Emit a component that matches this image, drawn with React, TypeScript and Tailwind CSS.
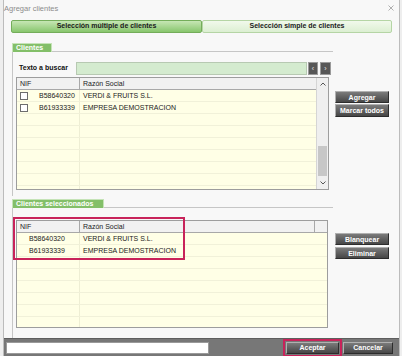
import React from 'react';

type Cliente = { nif: string; name: string };

const CLIENTES: Cliente[] = [
  { nif: 'B58640320', name: 'VERDI & FRUITS S.L.' },
  { nif: 'B61933339', name: 'EMPRESA DEMOSTRACION' },
];

function Chevron({ dir }: { dir: 'up' | 'down' }) {
  return (
    <svg width="6" height="4" viewBox="0 0 6 4" className="text-[#555]">
      <polyline
        points={dir === 'up' ? '0.5,3.5 3,1 5.5,3.5' : '0.5,0.5 3,3 5.5,0.5'}
        fill="none"
        stroke="currentColor"
        strokeWidth="1"
      />
    </svg>
  );
}

function DarkButton({ label, className = '' }: { label: string; className?: string }) {
  return (
    <div
      className={`flex items-center justify-center h-[12px] bg-gradient-to-b from-[#7b7b7b] to-[#474747] border border-t-[#b0b0b0] border-l-[#b0b0b0] border-r-[#2c2c2c] border-b-[#2c2c2c] text-white font-bold text-[7px] leading-none ${className}`}
    >
      {label}
    </div>
  );
}

function SectionHeader({ title, width }: { title: string; width: string }) {
  return (
    <div className="flex items-end h-[9px]">
      <div
        className={`h-[9px] ${width} bg-[#83bf69] border border-b-0 border-[#c5e3b7] text-white font-bold text-[7px] leading-[8px] pl-[3px]`}
      >
        {title}
      </div>
      <div className="flex-1 border-b border-[#c6c6c6]" />
    </div>
  );
}

function Scrollbar() {
  return (
    <div className="w-[12px] flex flex-col bg-[#efefef] border-l border-[#d5d5d5]">
      <div className="h-[12px] flex items-center justify-center">
        <Chevron dir="up" />
      </div>
      <div className="flex-1 flex flex-col justify-end px-[1px] pb-[1px]">
        <div className="h-[30px] bg-[#c7c7c7]" />
      </div>
      <div className="h-[12px] flex items-center justify-center">
        <Chevron dir="down" />
      </div>
    </div>
  );
}

function Grid({
  withCheck = false,
  withScroll = false,
  extraHead = false,
  className = '',
}: {
  withCheck?: boolean;
  withScroll?: boolean;
  extraHead?: boolean;
  className?: string;
}) {
  const rows = Array.from({ length: 10 }, (_, i) => CLIENTES[i]);
  return (
    <div className={`flex border border-[#9d9d9d] bg-[#ffffe6] overflow-hidden ${className}`}>
      <div className="flex-1 flex flex-col min-w-0">
        <div className="flex h-[12px] shrink-0 bg-[#f1f1f1] border-b border-[#a8a8a8] text-[7px] leading-[11px] text-[#222]">
          <div className="w-[63px] border-r border-[#a8a8a8] pl-[3px]">NIF</div>
          <div className="flex-1 pl-[3px]">Razón Social</div>
          {extraHead && <div className="w-[13px] border-l border-[#a8a8a8]" />}
        </div>
        {rows.map((r, i) => (
          <div
            key={i}
            className="flex h-[12px] shrink-0 border-b border-[#f1f1d9] text-[7px] leading-[11px] text-[#1b1b1b]"
          >
            <div className="w-[63px] border-r border-[#eeeed4] flex items-center">
              {withCheck ? (
                r && (
                  <>
                    <span className="ml-[3px] w-[8px] h-[8px] border border-[#6d6d6d] bg-white" />
                    <span className="ml-[11px]">{r.nif}</span>
                  </>
                )
              ) : (
                <span className="ml-[12px]">{r?.nif}</span>
              )}
            </div>
            <div className="flex-1 pl-[3px]">{r?.name}</div>
          </div>
        ))}
      </div>
      {withScroll && <Scrollbar />}
    </div>
  );
}

export default function App() {
  return (
    <div className="w-[402px] h-[356px] bg-[#eeeeee] font-['Liberation_Sans',Arial,sans-serif] overflow-hidden">
      <div className="ml-[3px] w-[397px] h-full flex flex-col bg-[#f8f8f8] border-x border-[#bcbcbc]">
        {/* title */}
        <div className="h-[20px] shrink-0 flex items-start justify-between pt-[4px]">
          <span className="text-[7.5px] leading-[9px] text-[#8c8c8c]">Agregar clientes</span>
          <svg width="6" height="6" viewBox="0 0 6 6" className="mt-[1px] mr-[5px] text-[#9a9a9a]">
            <path d="M0.5 0.5 L5.5 5.5 M5.5 0.5 L0.5 5.5" stroke="currentColor" strokeWidth="0.8" />
          </svg>
        </div>

        {/* tabs */}
        <div className="ml-[7px] w-[381px] h-[13px] shrink-0 flex">
          <div className="w-[191px] flex items-center justify-center rounded-[2px] bg-gradient-to-b from-[#c6e6b4] to-[#88c66d] border border-[#74ad5a] text-[7px] font-bold text-[#1a1a1a]">
            Selección múltiple de clientes
          </div>
          <div className="flex-1 flex items-center justify-center rounded-[2px] bg-gradient-to-b from-[#f1f9ec] to-[#dcefd2] border border-[#b5d5a5] text-[7px] font-bold text-[#1a1a1a]">
            Selección simple de clientes
          </div>
        </div>

        {/* section 1 */}
        <div className="flex pl-[8px] mt-[10px] shrink-0">
          <div className="w-[321px] flex flex-col">
            <SectionHeader title="Clientes" width="w-[40px]" />
            <div className="border-l border-[#c6c6c6] pl-[3px] pt-[10px] pb-[6px]">
              <div className="flex items-center h-[13px]">
                <span className="w-[60px] pl-[3px] text-[7px] font-bold text-[#111]">Texto a buscar</span>
                <div className="w-[231px] h-[13px] bg-[#d4ebcf] border border-[#b7c9b2]" />
                <div className="ml-[1px] w-[10px] h-[13px] flex items-center justify-center bg-[#575757] border border-[#9a9a9a] text-[7px] leading-none text-[#e6e6e6]">
                  ‹
                </div>
                <div className="ml-[2px] w-[11px] h-[13px] flex items-center justify-center bg-[#575757] border border-[#9a9a9a] text-[7px] leading-none text-[#e6e6e6]">
                  ›
                </div>
              </div>
              <Grid withCheck withScroll className="mt-[2px] w-[313px] h-[113px]" />
            </div>
          </div>
          <div className="ml-[2px] pt-[48px] flex flex-col gap-[1px]">
            <DarkButton label="Agregar" className="w-[54px]" />
            <DarkButton label="Marcar todos" className="w-[54px] h-[13px]" />
          </div>
        </div>

        {/* section 2 */}
        <div className="flex pl-[8px] mt-[3px] flex-1 min-h-0">
          <div className="relative w-[321px] flex flex-col">
            <SectionHeader title="Clientes seleccionados" width="w-[92px]" />
            <div className="flex-1 border-l border-[#c6c6c6] pl-[3px] pt-[12px]">
              <Grid extraHead className="w-[312px] h-[108px]" />
            </div>
            <div className="absolute left-[1px] top-[18px] w-[172px] h-[43px] border-2 border-[#c8235a]" />
          </div>
          <div className="ml-[2px] pt-[34px] flex flex-col gap-[2px]">
            <DarkButton label="Blanquear" className="w-[54px]" />
            <DarkButton label="Eliminar" className="w-[54px]" />
          </div>
        </div>

        {/* bottom bar */}
        <div className="h-[18px] shrink-0 flex items-center bg-[#777777] border-t border-[#5e5e5e]">
          <div className="ml-[2px] w-[203px] h-[12px] bg-white border border-[#9a9a9a]" />
          <div className="ml-[74px] w-[59px] h-[18px] flex items-center justify-center border-2 border-[#c8235a]">
            <DarkButton label="Aceptar" className="w-[53px]" />
          </div>
          <DarkButton label="Cancelar" className="ml-[1px] w-[50px]" />
        </div>
      </div>
    </div>
  );
}
